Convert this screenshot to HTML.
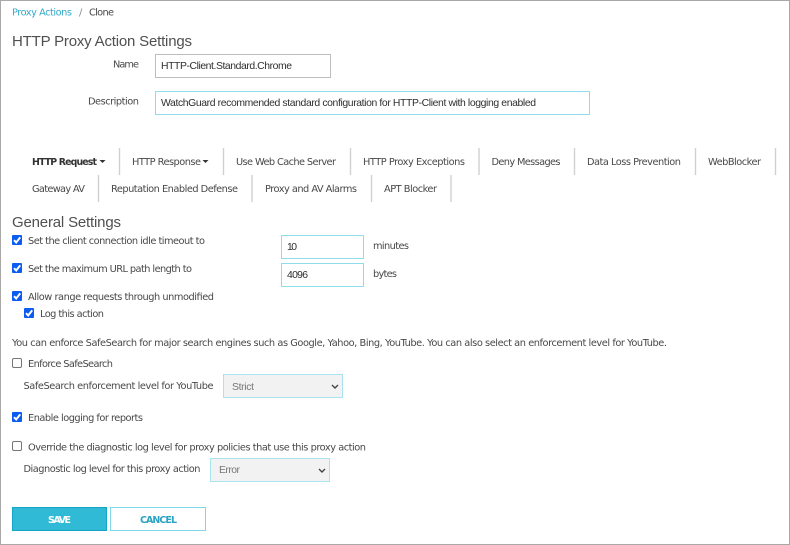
<!DOCTYPE html>
<html>
<head>
<meta charset="utf-8">
<title>HTTP Proxy Action Settings</title>
<style>
html,body{margin:0;padding:0;background:#fff;width:790px;height:545px;overflow:hidden}
svg{display:block;filter:blur(.25px)}
text{font-family:"DejaVu Sans","Liberation Sans",sans-serif;font-size:9.8px;fill:#484848;white-space:pre}
.a{font-family:"Liberation Sans",Arial,sans-serif;font-size:10.4px;fill:#2e2e2e}
.s{font-family:"Liberation Sans",Arial,sans-serif;font-size:10.4px;fill:#777}
.h{font-family:"Liberation Sans",Arial,sans-serif;font-size:15px;fill:#505050}
.sep{stroke:#d0d0d0;stroke-width:1.4}
</style>
</head>
<body>
<svg width="790" height="545" viewBox="0 0 790 545" xmlns="http://www.w3.org/2000/svg">
<defs>
<g id="on"><rect x="0" y="0" width="10" height="10" rx="1" fill="#0b5cf0"/><path d="M2 5.200 L4.200 7.500 L8.200 2.300" fill="none" stroke="#fff" stroke-width="2"/></g>
<g id="off"><rect x="0.500" y="0.500" width="9" height="9" rx="1.500" fill="#fff" stroke="#767676"/></g>
</defs>
<rect width="790" height="545" fill="#fff"/>
<rect x="0.500" y="0.500" width="789" height="544" fill="none" stroke="#a8a8a8"/>

<text x="12" y="15.500" textLength="60" style="fill:#35a9c9">Proxy Actions</text>
<text x="79" y="15.500" style="fill:#888">/</text>
<text x="89" y="15.500" textLength="25">Clone</text>
<text class="h" x="12" y="46" textLength="180">HTTP Proxy Action Settings</text>

<text x="113" y="67.500" textLength="26">Name</text>
<rect x="155.500" y="54.500" width="175" height="23" fill="#fff" stroke="#bdbdbd"/>
<text class="a" x="161" y="69" textLength="131">HTTP-Client.Standard.Chrome</text>
<text x="88" y="104.500" textLength="51">Description</text>
<rect x="155.500" y="91.500" width="434" height="23" fill="#fff" stroke="#8fdcea"/>
<text class="a" x="161" y="106" textLength="375">WatchGuard recommended standard configuration for HTTP-Client with logging enabled</text>

<text x="32" y="165" textLength="65" style="font-weight:bold;fill:#333;font-size:9.400px">HTTP Request</text>
<path d="M99.500 160h6l-3 3z" fill="#333"/>
<line class="sep" x1="119.500" y1="148" x2="119.500" y2="175"/>
<text x="132" y="165" textLength="69">HTTP Response</text>
<path d="M202.500 160h6l-3 3z" fill="#333"/>
<line class="sep" x1="223.500" y1="148" x2="223.500" y2="175"/>
<text x="236" y="165" textLength="100">Use Web Cache Server</text>
<line class="sep" x1="350.500" y1="148" x2="350.500" y2="175"/>
<text x="363" y="165" textLength="102">HTTP Proxy Exceptions</text>
<line class="sep" x1="479" y1="148" x2="479" y2="175"/>
<text x="491.500" y="165" textLength="69">Deny Messages</text>
<line class="sep" x1="574.500" y1="148" x2="574.500" y2="175"/>
<text x="587" y="165" textLength="94">Data Loss Prevention</text>
<line class="sep" x1="695.500" y1="148" x2="695.500" y2="175"/>
<text x="708" y="165" textLength="53">WebBlocker</text>
<line class="sep" x1="775.500" y1="148" x2="775.500" y2="175"/>

<text x="32" y="192" textLength="53">Gateway AV</text>
<line class="sep" x1="98.500" y1="175" x2="98.500" y2="202"/>
<text x="111" y="192" textLength="127">Reputation Enabled Defense</text>
<line class="sep" x1="252" y1="175" x2="252" y2="202"/>
<text x="265" y="192" textLength="92">Proxy and AV Alarms</text>
<line class="sep" x1="371.500" y1="175" x2="371.500" y2="202"/>
<text x="384" y="192" textLength="53">APT Blocker</text>
<line class="sep" x1="451" y1="175" x2="451" y2="202"/>

<text class="h" x="12" y="227" textLength="109">General Settings</text>

<use href="#on" x="12" y="235"/>
<text x="28" y="244" textLength="177">Set the client connection idle timeout to</text>
<rect x="281.500" y="235.500" width="82" height="23" fill="#fff" stroke="#8fdcea"/>
<text class="a" x="287" y="250" textLength="10">10</text>
<text x="373" y="249" textLength="36">minutes</text>

<use href="#on" x="12" y="263"/>
<text x="28" y="272" textLength="164">Set the maximum URL path length to</text>
<rect x="281.500" y="263.500" width="82" height="23" fill="#fff" stroke="#8fdcea"/>
<text class="a" x="287" y="278" textLength="21">4096</text>
<text x="373" y="277" textLength="24">bytes</text>

<use href="#on" x="12" y="291"/>
<text x="28" y="300" textLength="186">Allow range requests through unmodified</text>
<use href="#on" x="24" y="308"/>
<text x="40" y="317" textLength="64">Log this action</text>

<text x="12" y="346" textLength="655">You can enforce SafeSearch for major search engines such as Google, Yahoo, Bing, YouTube. You can also select an enforcement level for YouTube.</text>

<use href="#off" x="12" y="358"/>
<text x="28" y="367" textLength="85">Enforce SafeSearch</text>
<text x="23.500" y="389" textLength="190">SafeSearch enforcement level for YouTube</text>
<rect x="223.500" y="374.500" width="119" height="23" fill="#f2f2f2" stroke="#a9e3ee"/>
<text class="s" x="232" y="390" textLength="22">Strict</text>
<path d="M332 385l3 3 3-3" fill="none" stroke="#444" stroke-width="1.400"/>

<use href="#on" x="12" y="412"/>
<text x="28" y="421" textLength="115">Enable logging for reports</text>

<use href="#off" x="12" y="441"/>
<text x="28" y="450.500" textLength="338">Override the diagnostic log level for proxy policies that use this proxy action</text>
<text x="23.500" y="472" textLength="177">Diagnostic log level for this proxy action</text>
<rect x="210.500" y="458.500" width="119" height="23" fill="#f2f2f2" stroke="#a9e3ee"/>
<text class="s" x="219" y="473" textLength="21">Error</text>
<path d="M319 469l3 3 3-3" fill="none" stroke="#444" stroke-width="1.400"/>

<rect x="12.500" y="507.500" width="94" height="23" fill="#30bad6" stroke="#12a5c6"/>
<text x="48" y="523" textLength="23" style="font-weight:bold;fill:#fff;font-size:9.500px">SAVE</text>
<rect x="110.500" y="507.500" width="95" height="23" fill="#fff" stroke="#7fd8e8"/>
<text x="140" y="523" textLength="37" style="font-weight:bold;fill:#2ba3c2;font-size:9.500px">CANCEL</text>
</svg>
</body>
</html>
